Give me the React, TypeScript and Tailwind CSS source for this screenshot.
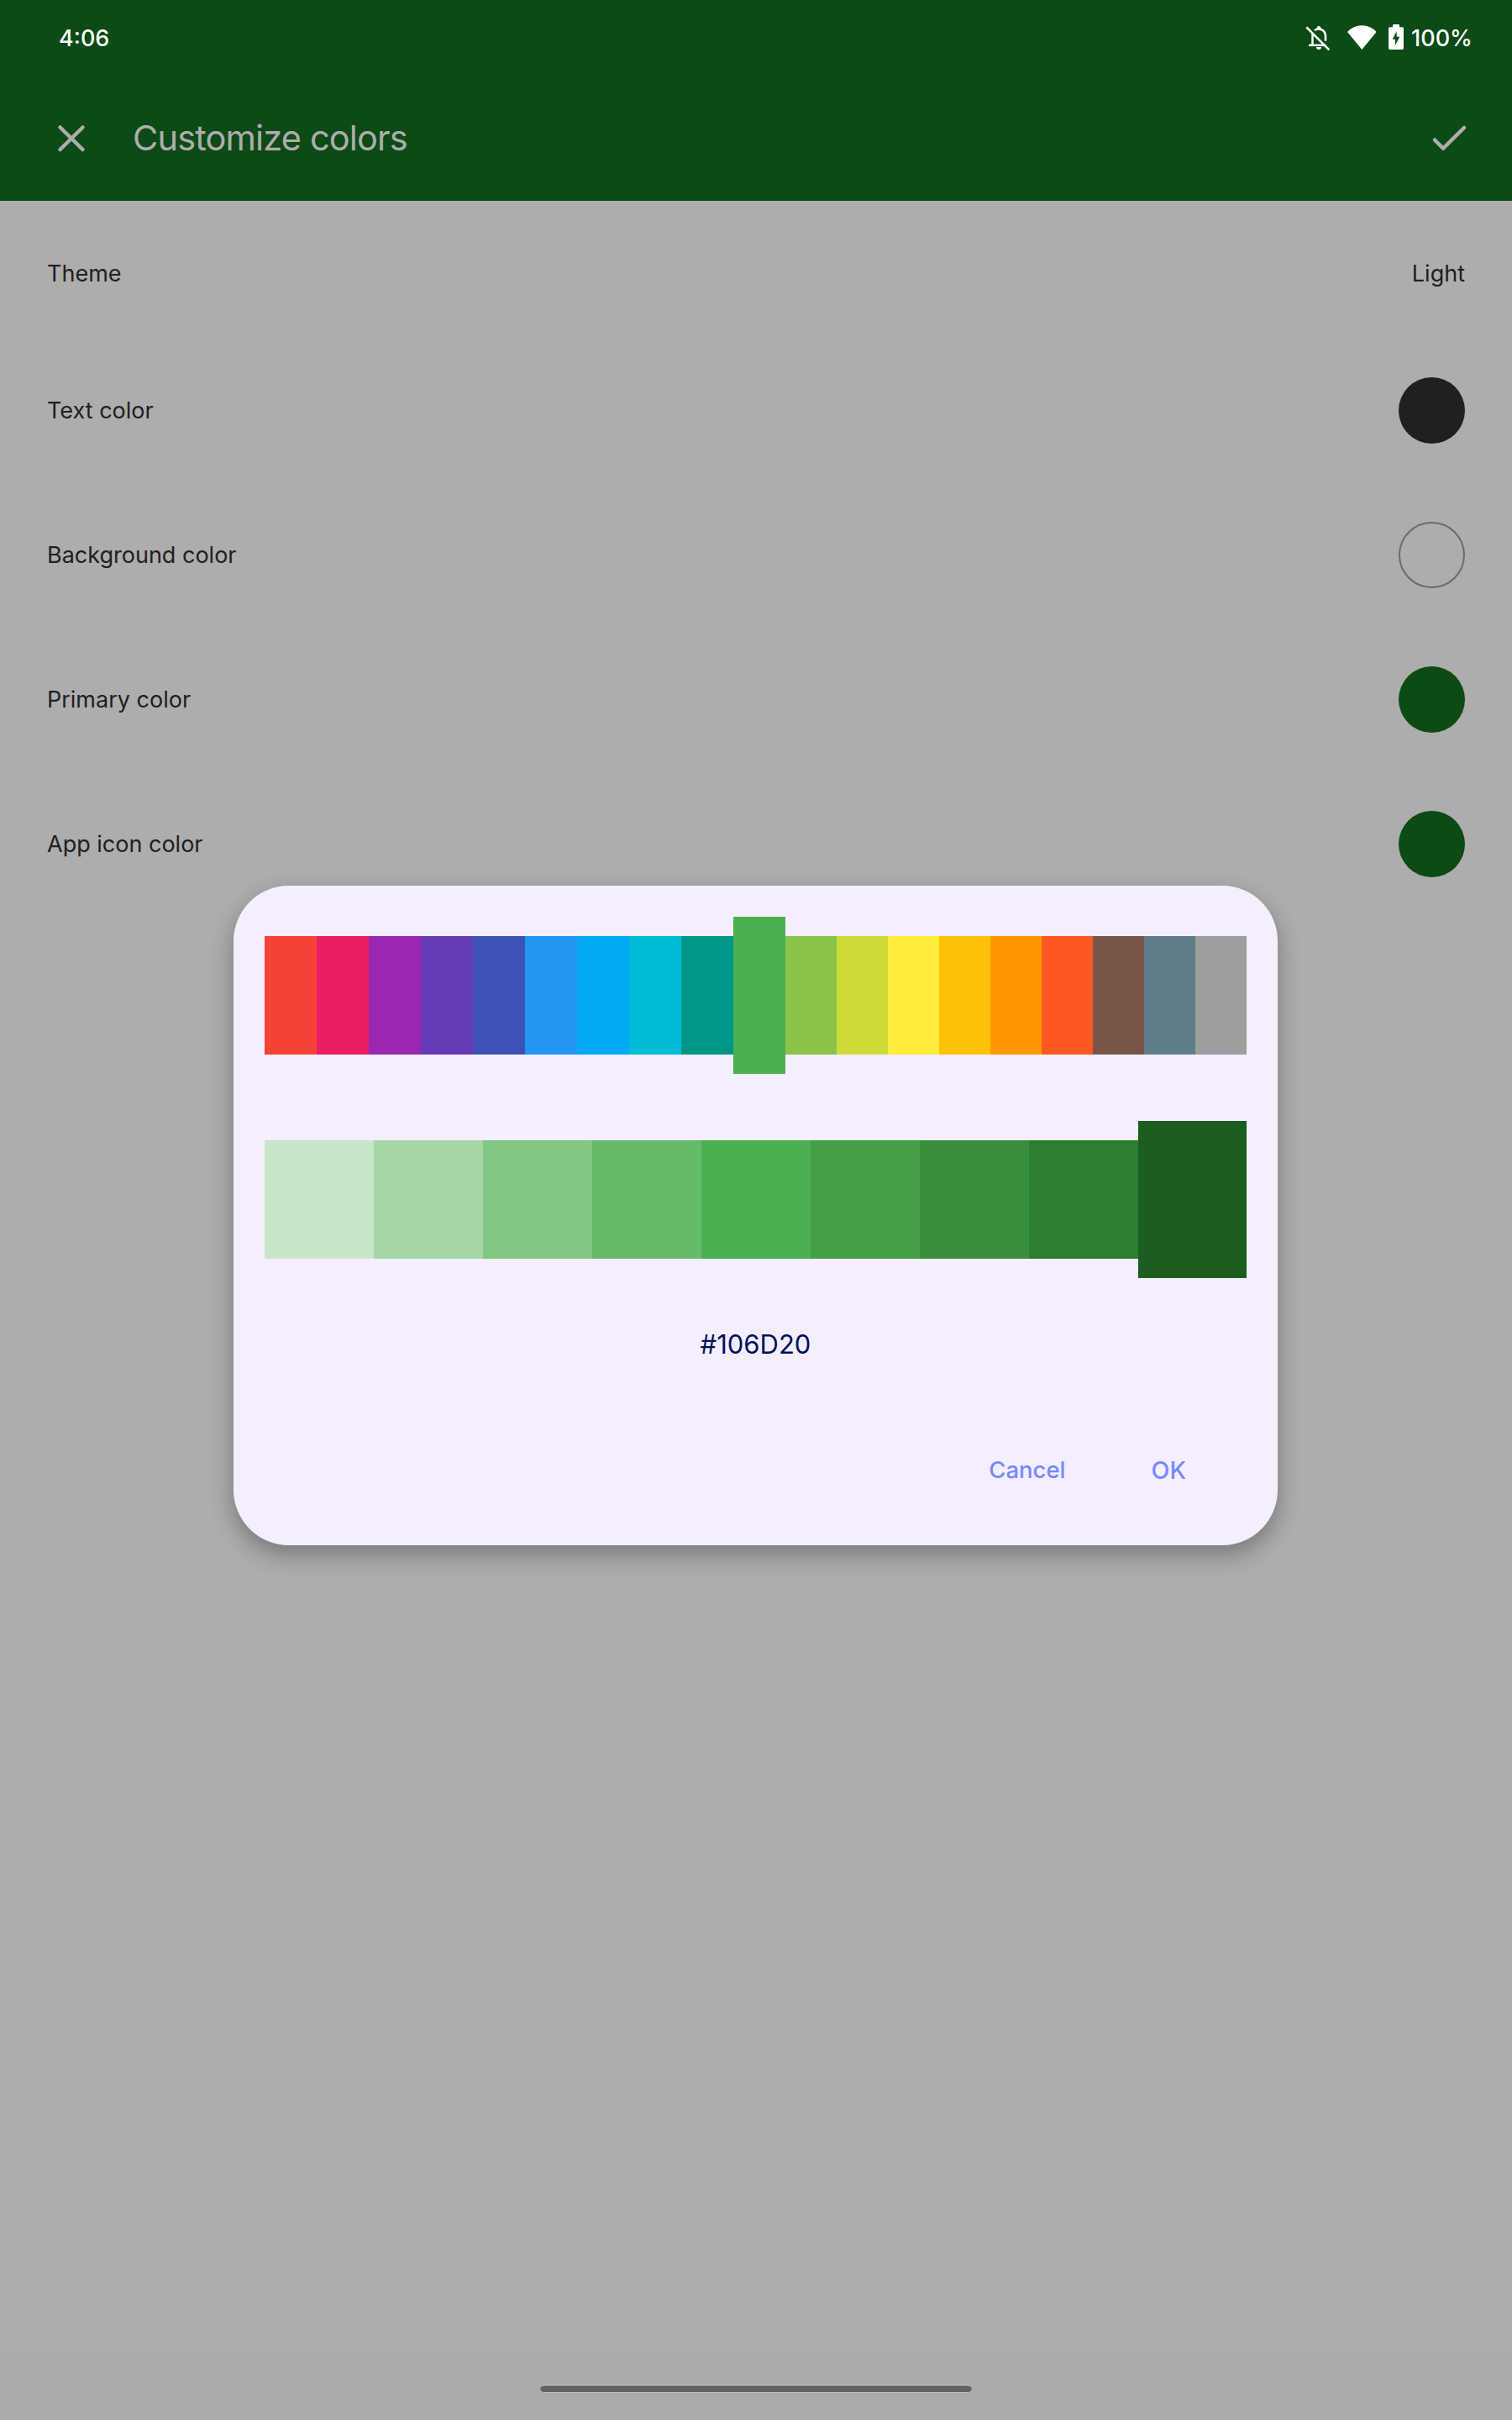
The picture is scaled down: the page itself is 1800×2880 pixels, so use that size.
const hues = [
  "#f44336", "#e91e63", "#9c27b0", "#673ab7", "#3f51b5", "#2196f3", "#03a9f4",
  "#00bcd4", "#009688", "#4caf50", "#8bc34a", "#cddc39", "#ffeb3b", "#ffc107",
  "#ff9800", "#ff5722", "#795548", "#607d8b", "#9e9e9e",
];

const shades = [
  "#c8e6c9", "#a5d6a7", "#81c784", "#66bb6a", "#4caf50", "#43a047", "#388e3c",
  "#2e7d32", "#1b5e20",
];

const rows = [
  { label: "Text color", swatch: "bg-[#202020]" },
  { label: "Background color", swatch: "border-2 border-[#6b6b6b]" },
  { label: "Primary color", swatch: "bg-[#0c4a16]" },
  { label: "App icon color", swatch: "bg-[#0c4a16]" },
];

function BellOff() {
  return (
    <svg className="h-[34px] w-[30px]" viewBox="27 24 90 102" fill="none" stroke="#fff" strokeWidth="7.5">
      <path d="M31 37 L112 118" strokeWidth="8" />
      <path d="M39 101.500 H100" />
      <path d="M52.500 61 V101" />
      <path d="M60 48 C80 36 99 50 99 70 V86" />
      <path d="M66 108 H84 A9 9 0 0 1 66 108 Z" fill="#fff" stroke="none" />
      <path d="M68 46 V40 A7 7 0 0 1 82 40 V46 Z" fill="#fff" stroke="none" />
    </svg>
  );
}

function Wifi() {
  return (
    <svg className="h-[34px] w-[37px]" viewBox="174 24 111 102" fill="#fff">
      <path d="M177 54 A70 70 0 0 1 281 54 L229 117 Z" />
    </svg>
  );
}

function BatteryCharging() {
  return (
    <svg className="h-[34px] w-5" viewBox="321 24 60 102">
      <path d="M339 37 V30 Q339 27 342 27 H360 Q363 27 363 30 V37 H373 Q378 37 378 42 V112 Q378 117 373 117 H329 Q324 117 324 112 V42 Q324 37 329 37 Z" fill="#fff" />
      <path d="M353 51 L338 80 H348 V102 L364 71 H353 Z" fill="#0c4a16" />
    </svg>
  );
}

export default function App() {
  return (
    <div className="relative flex h-[2880px] w-[1800px] flex-col overflow-hidden bg-[#adadad] font-[Inter,Roboto,sans-serif] text-[27px] text-[#202020]">
      <header className="h-[239px] bg-[#0c4a16]">
        <div className="flex h-[90px] items-center pr-[46px] pl-[70px] text-[27px] font-[450] text-white">
          <span className="pt-0.5">4:06</span>
          <div className="ml-auto flex items-center">
            <BellOff />
            <span className="w-[19px]" />
            <Wifi />
            <span className="w-3" />
            <BatteryCharging />
            <span className="ml-2 w-[74px] pt-0.5 whitespace-nowrap">100%</span>
          </div>
        </div>
        <div className="flex h-[149px] items-center pr-[52px] pl-[66px] text-[#adadad]">
          <svg className="h-[38px] w-[38px]" viewBox="0 0 38 38" fill="none" stroke="currentColor" strokeWidth="4.5" strokeLinecap="round">
            <path d="M5.500 5.500 L32.500 32 M32.500 5.500 L5.500 32" />
          </svg>
          <h1 className="ml-[54px] text-[41.5px] leading-none tracking-[-0.85px]">Customize colors</h1>
          <svg className="ml-auto h-[38px] w-[45px]" viewBox="0 0 45 38" fill="none" stroke="currentColor" strokeWidth="4.500" strokeLinecap="round" strokeLinejoin="round">
            <path d="M5 20.500 L15 30.700 L40 6" />
          </svg>
        </div>
      </header>

      <main className="px-14">
        <div className="mt-[10px] flex h-[154px] items-center justify-between">
          <span>Theme</span>
          <span>Light</span>
        </div>
        {rows.map((row) => (
          <div key={row.label} className="mb-px flex h-[171px] items-center justify-between">
            <span className="pt-0.5">{row.label}</span>
            <span className={`h-[79px] w-[79px] rounded-full ${row.swatch}`} />
          </div>
        ))}
      </main>

      <div className="mt-auto flex h-20 justify-center bg-[#ababad] pt-[38px]">
        <div className="h-[10px] w-[514px] rounded-full border-y border-[#d0d0d0] bg-[#636365]" />
      </div>

      <div
        role="dialog"
        className="absolute top-[1054px] left-[278px] flex h-[785px] w-[1243px] flex-col rounded-[66px] bg-[#f4eeff] px-[37px] pt-[37px] shadow-[0_11px_28px_rgba(0,0,0,0.31)]"
      >
        <div className="flex h-[187px] items-center">
          {hues.map((color, i) => (
            <span
              key={color}
              className={`${i < 10 ? "w-[62px]" : "w-[61px]"} ${i === 9 ? "h-[187px]" : "h-[141px]"}`}
              style={{ backgroundColor: color }}
            />
          ))}
        </div>
        <div className="mt-14 flex h-[187px] items-center">
          {shades.map((color, i) => (
            <span
              key={color}
              className={i === 8 ? "h-[187px] w-[129px]" : "h-[141px] w-[130px]"}
              style={{ backgroundColor: color }}
            />
          ))}
        </div>
        <div className="mt-[49px] flex h-[60px] items-center justify-center text-[31px] text-[#00105c]">
          #106D20
        </div>
        <div className="mt-[90px] flex h-[60px] items-center justify-end gap-[102px] pr-[72px] text-[27.5px] font-[450] text-[#7489ff]">
          <button>Cancel</button>
          <button className="text-[28.5px]">OK</button>
        </div>
      </div>
    </div>
  );
}
